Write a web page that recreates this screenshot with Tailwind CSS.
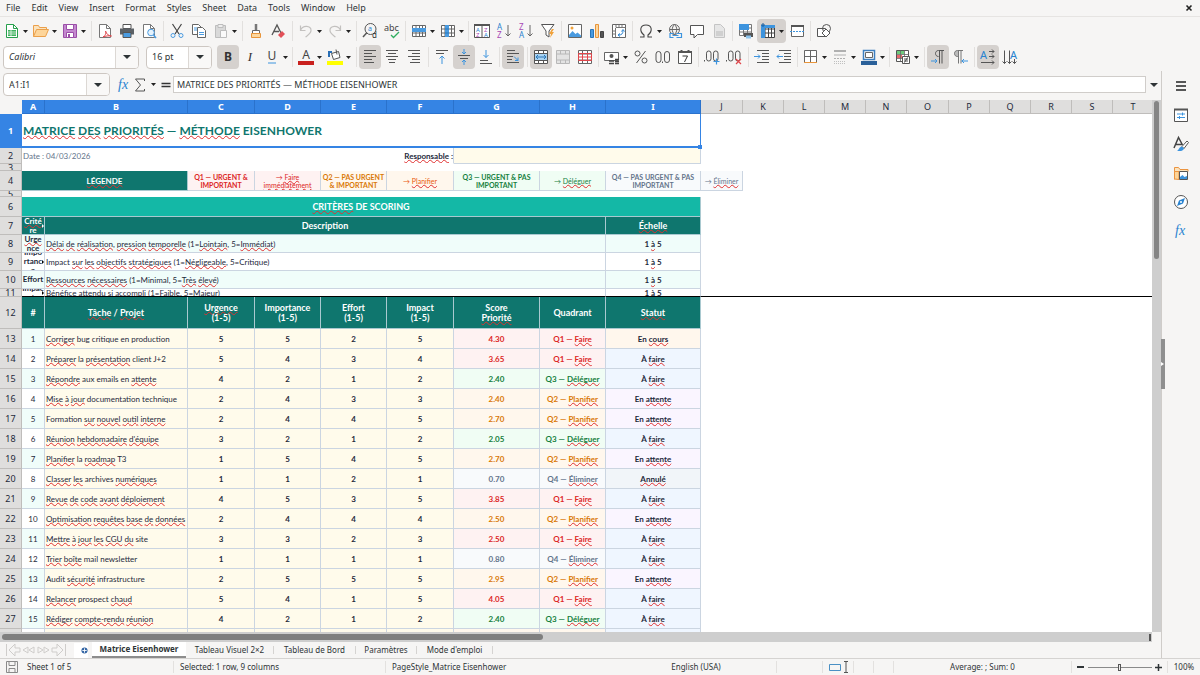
<!DOCTYPE html>
<html lang="fr">
<head>
    <meta charset="UTF-8">
    <meta name="viewport" content="width=device-width, initial-scale=1.0">
    <title>Matrice Eisenhower</title>
    <script src="https://cdn.jsdelivr.net/npm/@tailwindcss/browser@4"></script>
</head>
<body class="bg-[#f6f5f4] text-[#2e3436] font-['Noto_Sans',sans-serif]">
    <div class="h-screen flex flex-col overflow-hidden">
        <!-- Menu bar -->
        <nav class="h-[17px] shrink-0 flex items-center gap-[11px] pl-[6px] pr-[7px] text-[9px] border-b border-[#e6e4e2]">
            <a href="#">File</a>
            <a href="#">Edit</a>
            <a href="#">View</a>
            <a href="#">Insert</a>
            <a href="#">Format</a>
            <a href="#">Styles</a>
            <a href="#">Sheet</a>
            <a href="#">Data</a>
            <a href="#">Tools</a>
            <a href="#">Window</a>
            <a href="#">Help</a>
            <button aria-label="Close" class="ml-auto">
                <svg class="size-2" viewBox="0 0 8 8" fill="none" stroke="#222" stroke-width="1.6"><path d="M1.500 1.500l5 5M6.500 1.500l-5 5"/></svg>
            </button>
        </nav>

        <!-- Standard toolbar -->
        <div id="standardBar" class="h-7 shrink-0 flex items-center pl-px"></div>

        <!-- Formatting toolbar -->
        <div class="h-6 shrink-0 flex items-center pl-[3px]">
            <div class="flex w-[136px] h-[23px] mr-[7px] rounded border border-[#cdc7c2] bg-white overflow-hidden">
                <input aria-label="Font name" value="Calibri" class="flex-1 min-w-0 pl-[5px] text-[9px] italic">
                <button aria-label="Font list" class="w-[23px] border-l border-[#dcd8d4] bg-[#f9f8f7] flex items-center justify-center"><svg class="w-2 h-1" viewBox="0 0 8 4"><path d="M0 0h8L4 4z" fill="#2e3436"/></svg></button>
            </div>
            <div class="flex w-[66px] h-[23px] mr-[5px] rounded border border-[#cdc7c2] bg-white overflow-hidden">
                <input aria-label="Font size" value="16 pt" class="flex-1 min-w-0 pl-[5px] text-[9px]">
                <button aria-label="Size list" class="w-[23px] border-l border-[#dcd8d4] bg-[#f9f8f7] flex items-center justify-center"><svg class="w-2 h-1" viewBox="0 0 8 4"><path d="M0 0h8L4 4z" fill="#2e3436"/></svg></button>
            </div>
            <div id="formatBar" class="flex items-center"></div>
        </div>

        <div class="flex-1 min-h-0 flex">
            <div class="flex-1 min-w-0 flex flex-col">
                <!-- Formula bar -->
                <div class="h-[31px] shrink-0 flex items-center pl-[3px]">
                    <div class="flex w-[107px] h-[23px] rounded border border-[#cdc7c2] bg-white overflow-hidden">
                        <input aria-label="Name box" value="A1:I1" class="flex-1 min-w-0 pl-[5px] text-[9px]">
                        <button aria-label="Named ranges" class="w-[23px] border-l border-[#dcd8d4] bg-[#f9f8f7] flex items-center justify-center"><svg class="w-2 h-1" viewBox="0 0 8 4"><path d="M0 0h8L4 4z" fill="#2e3436"/></svg></button>
                    </div>
                    <div id="formulaButtons" class="flex items-center ml-[5px] pl-px"></div>
                    <input aria-label="Formula" value="MATRICE DES PRIORITÉS — MÉTHODE EISENHOWER" class="flex-1 min-w-0 h-[17px] pl-[3px] bg-white border border-[#d0cdca] text-[9px]">
                    <button aria-label="Expand formula bar" class="w-[15px] flex items-center justify-center"><svg class="w-2 h-1" viewBox="0 0 8 4"><path d="M0 0h8L4 4z" fill="#2e3436"/></svg></button>
                </div>

                <!-- Sheet -->
                <div class="flex-1 min-h-0 flex">
                    <div class="flex-1 min-w-0 bg-white overflow-hidden">
                        <table class="table-fixed w-[1154px] border-separate border-spacing-0 font-[Lato,sans-serif] text-[#1e293b]">
                            <colgroup>
                                <col class="w-[22px]"><col class="w-[23px]"><col class="w-[143px]"><col class="w-[67px]"><col class="w-[66px]"><col class="w-[66px]"><col class="w-[67px]"><col class="w-[86px]"><col class="w-[66px]"><col class="w-[95px]"><col class="w-[42px]">
                                <col class="w-[41px]"><col class="w-[41px]"><col class="w-[41px]"><col class="w-[41px]"><col class="w-[42px]"><col class="w-[41px]"><col class="w-[41px]"><col class="w-[41px]"><col class="w-[41px]"><col class="w-[41px]">
                            </colgroup>
                            <thead><tr id="columnHeads"></tr></thead>
                            <tbody id="cells"></tbody>
                        </table>
                    </div>
                    <div class="w-[9px] bg-[#cecece] px-[2px] pt-px">
                        <div class="h-[158px] rounded-full bg-[#858585]"></div>
                    </div>
                </div>
                <div class="h-[10px] shrink-0 mr-[9px] bg-[#cecece] pl-[2px] flex items-center justify-between">
                    <div class="w-[47%] h-[6px] rounded-full bg-[#7f7f7f]"></div>
                    <div class="w-[2px] h-[7px] mr-px bg-[#555]"></div>
                </div>

                <!-- Sheet tabs -->
                <div class="h-4 shrink-0 flex items-center text-[8px]">
                    <svg class="w-[62px] h-3 ml-[5px] mr-[7px]" viewBox="0 0 62 12" fill="none" stroke="#cfcdcb"><path d="M1.500 0v12M10 0L4 6l6 6V8h5V4h-5zM23 3l-5 3 5 3zM29 3l-5 3 5 3zM33 3l5 3-5 3zM39 3l5 3-5 3zM52 0l6 6-6 6V8h-5V4h5zM60.500 0v12"/></svg>
                    <button aria-label="Add sheet" class="w-[14px] h-[15px] mr-1 bg-white flex items-center justify-end">
                        <svg class="size-[7px]" viewBox="0 0 8 8"><circle cx="4" cy="4" r="3.500" fill="#3465a4"/><path d="M4 1.500v5M1.500 4h5" stroke="#fff"/></svg>
                    </button>
                    <button class="w-[94px] h-4 font-bold bg-white border-b-2 border-[#8d8d8d]">Matrice Eisenhower</button>
                    <button class="w-[88px] h-2 leading-[8px] border-r border-[#d5d3d1]">Tableau Visuel 2×2</button>
                    <button class="w-[82px] h-2 leading-[8px] border-r border-[#d5d3d1]">Tableau de Bord</button>
                    <button class="w-[61px] h-2 leading-[8px] border-r border-[#d5d3d1]">Paramètres</button>
                    <button class="w-[76px] h-2 leading-[8px] border-r border-[#d5d3d1]">Mode d'emploi</button>
                </div>
            </div>

            <!-- Sidebar -->
            <aside id="sidebar" class="relative w-[39px] shrink-0 mt-[2px] border-l border-[#cfccc9] flex flex-col items-center"></aside>
        </div>

        <!-- Status bar -->
        <footer class="h-[17px] shrink-0 flex items-center border-t border-[#d5d3d1] text-[8px] whitespace-nowrap">
            <div class="w-[27px] pl-[6px]"><svg class="size-3" viewBox="0 0 12 12" fill="none" stroke="#8a8a8a"><path d="M.5.5h11v11H.5zM3 .5v4h6v-4M3 11.500v-4h6v4"/></svg></div>
            <div class="w-[147px] h-3 leading-[12px] border-r border-[#e3e1df]">Sheet 1 of 5</div>
            <div class="w-[212px] h-3 leading-[12px] pl-[6px] border-r border-[#e3e1df]">Selected: 1 row, 9 columns</div>
            <div class="flex-1 h-3 leading-[12px] pl-[6px]">PageStyle_Matrice Eisenhower</div>
            <div class="w-[161px] h-3 leading-[12px] text-center border-r border-[#e3e1df]">English (USA)</div>
            <div class="w-[46px] h-3 border-r border-[#e3e1df]"></div>
            <div class="w-[31px] h-3 pl-[6px] border-r border-[#e3e1df]">
                <svg class="w-5 h-3" viewBox="0 0 20 12" fill="none"><path d="M.5 3.500h11v6H.5z" stroke="#4a90c4"/><path d="M15 .5h4M17 .5v11M15 11.500h4" stroke="#555"/></svg>
            </div>
            <div class="w-5 h-3 border-r border-[#e3e1df]"></div>
            <div class="w-5 h-3 border-r border-[#e3e1df]"></div>
            <div class="w-[178px] h-3 leading-[12px] text-center border-r border-[#e3e1df]">Average: ; Sum: 0</div>
            <div class="w-24 h-3 flex items-center justify-between px-[5px] border-r border-[#e3e1df]">
                <button aria-label="Zoom out" class="w-[7px] h-[2px] bg-[#2e3436]"></button>
                <input type="range" aria-label="Zoom" class="appearance-none w-16 h-3 bg-transparent [&::-webkit-slider-runnable-track]:h-px [&::-webkit-slider-runnable-track]:bg-[#8a8a8a] [&::-webkit-slider-thumb]:appearance-none [&::-webkit-slider-thumb]:w-[3px] [&::-webkit-slider-thumb]:h-[7px] [&::-webkit-slider-thumb]:-mt-[3px] [&::-webkit-slider-thumb]:border [&::-webkit-slider-thumb]:border-[#555] [&::-webkit-slider-thumb]:bg-[#eee]">
                <button aria-label="Zoom in"><svg class="size-[7px]" viewBox="0 0 7 7"><path d="M3.500 0v7M0 3.500h7" stroke="#2e3436" stroke-width="1.500"/></svg></button>
            </div>
            <div class="w-8 text-center">100%</div>
        </footer>
    </div>

    <script>
        // Icons, all drawn on a 16x16 grid
        const grid = '<path d="M1.500 2.500h13v11h-13zM1.500 6h13M1.500 10h13M5 2.500v11M8.500 2.500v11M11.500 2.500v11" fill="#fff" stroke="#666"/>';
        const page = '<path d="M2.500 1.500h7l4 4v9h-11z" fill="#fff" stroke="#777"/><path d="M9.500 1.500v4h4" stroke="#777"/>';
        const icons = {
            new: '<path d="M2.500 1.500h7l4 4v9h-11z" fill="#fff" stroke="#27a04c"/><path d="M9.500 1.500v4h4" stroke="#27a04c"/><path d="M4 7h8v6H4z" fill="#3fb25f"/><path d="M4 9h8M4 11h8M7 7v6" stroke="#fff" stroke-width=".7"/>',
            open: '<path d="M.5 13.500v-11h5l1 2h7v2" fill="#fbe3bd" stroke="#eba04b"/><path d="M.5 13.500l3-7h12l-3 7z" fill="#fdd59a" stroke="#eba04b"/>',
            save: '<path d="M1.500 1.500h13v13h-13z" fill="#c489cf" stroke="#9b4fa8"/><path d="M4.500 1.500h7v5h-7zM4.500 14.500v-5h7v5z" fill="#fff" stroke="#9b4fa8"/><path d="M6 11h2v3H6z" fill="#9b4fa8"/>',
            pdf: page + '<path d="M6 14c3-2 3-4 2.500-6 1 3 3 5 6 5-3-.5-6 0-8.500 1z" stroke="#e0474c" fill="none"/>',
            print: '<path d="M4 1.500h8v4H4z" fill="#fff" stroke="#555"/><path d="M1 5.500h14v6H1z" fill="#5c6166"/><path d="M4 9.500h8v5H4z" fill="#4a9be0" stroke="#555"/>',
            preview: page + '<circle cx="10" cy="9.500" r="3.300" fill="#e6f3fd" stroke="#4a9be0"/><path d="M12.500 12l2.500 3" stroke="#4a9be0" stroke-width="1.500"/>',
            cut: '<path d="M3.500 1l6.500 10M12.500 1L6 11" stroke="#444" stroke-width="1.200"/><circle cx="4" cy="12.500" r="2" stroke="#4a9be0"/><circle cx="12" cy="12.500" r="2" stroke="#4a9be0"/>',
            copy: '<path d="M1.500 1.500h6l3 3v7h-9z" fill="#fff" stroke="#666"/><path d="M6.500 4.500h5l3 3v7h-8z" fill="#fff" stroke="#666"/><path d="M8 9.500h5M8 11.500h5M3 5h3M3 7h3" stroke="#4a9be0"/>',
            paste: '<path d="M2.500 2.500h10v12h-10z" fill="#d9d9d9" stroke="#bdbdbd"/><path d="M5 1.500h5v3H5z" fill="#eee" stroke="#bdbdbd"/><path d="M7.500 7.500h6v7h-6z" fill="#fafafa" stroke="#bdbdbd"/>',
            clone: '<path d="M8 1v7" stroke="#777" stroke-width="2.500"/><path d="M4.500 7.500h7v3h-7z" fill="#fff" stroke="#666"/><path d="M3.500 10.500h9v4h-9z" fill="#fcd79f" stroke="#e8953b"/>',
            clear: '<path d="M2 12L7 2l4 8M4 8.500h5" stroke="#555" stroke-width="1.300"/><path d="M8 12l4-4 3 3-4 4z" fill="#e25058"/>',
            undo: '<path d="M2.500 2.500v5h5M2.500 7.500c2-6 11-5 10.500 0 0 3-3 4.500-5.500 6.500" stroke="#c3c1bf" stroke-width="1.200"/>',
            redo: '<path d="M13.500 2.500v5h-5M13.500 7.500c-2-6-11-5-10.500 0 0 3 3 4.500 5.500 6.500" stroke="#c3c1bf" stroke-width="1.200"/>',
            find: '<circle cx="8.500" cy="6" r="5.500" stroke="#555"/><path d="M5 9.500L1 14" stroke="#555" stroke-width="1.500"/><text x="6" y="8" font-size="7" fill="#2a83d0">a</text><text x="10" y="15" font-size="8" fill="#333">d</text>',
            spell: '<text x="0" y="8" font-size="9" fill="#444">abc</text><path d="M7 12l2.500 2.500L15 9" stroke="#2fae60" stroke-width="1.300"/>',
            row: grid + '<path d="M1 5h14v4H1z" fill="#4a9be0"/>',
            col: grid + '<path d="M5 2h4v12H5z" fill="#4a9be0"/><path d="M5 6h4M5 10h4" stroke="#2a76b8"/>',
            sort: '<path d="M.5 1.500h15v13H.5zM8 1.500v13" fill="#fff" stroke="#555"/><path d="M0 2h16" stroke="#555" stroke-width="2"/><text x="2" y="8.500" font-size="6" fill="#2a83d0">A</text><text x="2" y="14" font-size="6" fill="#a848b5">Z</text><text x="10" y="8.500" font-size="6" fill="#a848b5">Z</text><text x="10" y="14" font-size="6" fill="#2a83d0">A</text>',
            asc: '<text x="1" y="7" font-size="8" fill="#2a83d0">A</text><text x="1" y="15" font-size="8" fill="#a848b5">Z</text><path d="M12 2v11M9.500 10.500L12 13l2.500-2.500" stroke="#666"/>',
            desc: '<text x="1" y="7" font-size="8" fill="#a848b5">Z</text><text x="1" y="15" font-size="8" fill="#2a83d0">A</text><path d="M12 2v11M9.500 10.500L12 13l2.500-2.500" stroke="#666"/>',
            filter: '<path d="M1.500 1.500h12.500L9 8v6l-3-2V8z" fill="#fff" stroke="#555"/><path d="M12 6L9 11h2l-1 4 4-6h-2l2-3z" fill="#f0a23c"/>',
            image: '<path d="M1.500 1.500h13v13h-13z" fill="#fff" stroke="#666"/><path d="M2 14v-2l3.500-4 3 3 2-1.500 3.500 3V14z" fill="#4a9be0"/><circle cx="5" cy="5" r="1.500" fill="#f0a23c"/>',
            chart: '<path d="M1.500 6.500h3v8h-3z" fill="#4a9be0" stroke="#2a76b8"/><path d="M6.500 1.500h3v13h-3z" fill="#fcd79f" stroke="#e8953b"/><path d="M11.500 8.500h3v6h-3z" fill="#555" stroke="#444"/>',
            pivot: '<path d="M1.500 1.500h13v13h-13z" fill="#fff" stroke="#666"/><path d="M5 4.500h9.500M4.500 5v9.500M5 1.500v3M8 1.500v3M11 1.500v3M1.500 8h3M1.500 11h3" stroke="#777"/><path d="M7.500 12c3.500 0 4.500-1.500 4.500-4.500M10.500 8.500L12 6.500l1.500 2M9 10.500l-2 1.500 2 1.500" stroke="#2a83d0"/>',
            omega: '<path d="M2 14h4v-2C1 8 2 2 8 2s7 6 2 10v2h4" stroke="#444" stroke-width="1.100"/>',
            link: '<circle cx="7.500" cy="6.500" r="5" stroke="#666"/><path d="M2.500 6.500h10M7.500 1.500c-3 3-3 7 0 10M7.500 1.500c3 3 3 7 0 10" stroke="#666"/><path d="M6.500 10.500H3v4h3.500M9.500 10.500h5v4h-5M5.500 12.500h6" stroke="#3d94de" stroke-width="1.200" fill="none"/>',
            comment: '<path d="M1.500 2.500h13v9H8.500L5 15v-3.500H1.500z" fill="#fff" stroke="#555"/>',
            header: '<path d="M3.500 1.500h6l4 4v9h-10z" fill="#e6e6e6" stroke="#c4c4c4"/><path d="M5 8h7v5H5z" fill="#d0d0d0"/>',
            printArea: '<path d="M1.500 1.500h12v11h-12zM1.500 5h12M1.500 9h12M5.500 1.500v11M9.500 1.500v11" fill="#fff" stroke="#777"/><path d="M1 1h10v6H1z" fill="#3d94de"/><path d="M6 10h9v4H6z" fill="#555"/><path d="M8 12.500h5v3H8z" fill="#8ec5ee"/>',
            freeze: '<path d="M1.500 2.500h13v12h-13zM1.500 6h13M1.500 10h13M5 2.500v12M8.500 2.500v12M11.500 2.500v12" fill="#fff" stroke="#444"/><path d="M1 2h4v13H1zM1 2h14v3H1z" fill="#3d94de"/><path d="M3 0v4M1 2h4" stroke="#1b5f9e"/>',
            split: '<path d="M2.500 2.500h12v11h-12z" fill="#fff" stroke="#666"/><path d="M2 3h13" stroke="#555" stroke-width="2"/><path d="M1 8.500h15" stroke="#3d94de" stroke-dasharray="2 1"/>',
            shapes: '<path d="M1.500 5.500h8v8h-8z" fill="#fff" stroke="#555"/><circle cx="10.500" cy="5.500" r="4" stroke="#555"/><path d="M10 6l4 4-4 4-4-4z" fill="#fff" stroke="#555"/>',
            bold: '<text x="8" y="12" font-size="12" font-weight="700" text-anchor="middle" fill="#333">B</text>',
            italic: '<text x="8" y="12" font-size="13" font-family="Liberation Serif" font-style="italic" text-anchor="middle" fill="#333">I</text>',
            underline: '<text x="8" y="11" font-size="12" text-anchor="middle" fill="#444">U</text><path d="M4 14h8" stroke="#3d94de"/>',
            color: '<text x="8" y="10" font-size="12" text-anchor="middle" fill="#444">A</text><path d="M0 14h16" stroke="#c9211e" stroke-width="4"/>',
            fill: '<path d="M4.500 4.500l7-2 1.500 6-6.500 2z" fill="#fff" stroke="#555"/><path d="M2 8V3h3" stroke="#2a6fb5" stroke-width="2"/><path d="M9 .5l1 5" stroke="#555"/><path d="M0 14h16" stroke="#ffff00" stroke-width="4"/>',
            left: '<path d="M2 1.500h12M2 4.500h8M2 7.500h12M2 10.500h8M2 13.500h10" stroke="#555"/>',
            center: '<path d="M2 1.500h12M4 4.500h8M2 7.500h12M4 10.500h8M5 13.500h6" stroke="#555"/>',
            right: '<path d="M2 1.500h12M6 4.500h8M2 7.500h12M6 10.500h8M4 13.500h10" stroke="#555"/>',
            top: '<path d="M2 1.500h12M2 4.500h8" stroke="#555"/><path d="M8 15V7M5.500 9.500L8 7l2.500 2.500" stroke="#3d94de"/>',
            middle: '<path d="M2 6.500h12M4 9.500h8" stroke="#555"/><path d="M8 0v5M6 3l2 2 2-2M8 16v-5M6 13l2-2 2 2" stroke="#3d94de"/>',
            bottom: '<path d="M2 11.500h8M2 14.500h12" stroke="#555"/><path d="M8 1v7.500M5.500 6L8 8.500 10.500 6" stroke="#3d94de"/>',
            wrap: '<path d="M2 1.500h8M2 4.500h12M2 7.500h6M2 10.500h5M2 13.500h12" stroke="#555"/><path d="M9 7.500l4 4M13 8.500v3h-3" stroke="#3d94de"/>',
            merge: '<path d="M1.500 1.500h13v13h-13zM1.500 4.500h13M1.500 11.500h13M5.500 1.500v3M10.500 1.500v3M5.500 11.500v3M10.500 11.500v3" fill="#fff" stroke="#555"/><path d="M2 5h12v6H2z" fill="#a8d3f3"/><path d="M3 8h10M5 6L3 8l2 2M11 6l2 2-2 2" stroke="#2a76b8"/>',
            mergeCells: '<path d="M1.500 1.500h13v13h-13zM1.500 5h13M1.500 11h13M5.500 1.500V5M10.500 1.500V5M5.500 11v3.500M10.500 11v3.500" fill="#e3e3e3" stroke="#b8b8b8"/>',
            splitCells: '<path d="M1.500 1.500h13v13h-13zM1.500 5h13M1.500 11h13M5.500 1.500v13M10.500 1.500v13" fill="#fff" stroke="#666"/><path d="M1.500 4.500h13v7h-13zM5.500 4.500v7M10.500 4.500v7M1.500 8h13" stroke="#e0474c"/>',
            currency: '<path d="M.5 3.500h14v8H.5z" fill="#fff" stroke="#666"/><circle cx="7.500" cy="7" r="2" fill="#555"/><path d="M5 12h5M5 14.500h5M11 10.500h4M11 12.500h4M11 14.500h4" stroke="#444" stroke-width="1.500"/>',
            percent: '<circle cx="4.500" cy="4.500" r="2.500" stroke="#555"/><circle cx="11.500" cy="11.500" r="2.500" stroke="#555"/><path d="M12.500 2l-9 12" stroke="#555"/>',
            number: '<rect x="1" y="2.500" width="5" height="11" rx="2.500" stroke="#555"/><rect x="9.500" y="2.500" width="5" height="11" rx="2.500" stroke="#555"/><path d="M7.500 12.500v1.500" stroke="#555"/>',
            date: '<path d="M1.500 2.500h13v12h-13z" fill="#fff" stroke="#555"/><path d="M1 3h14M4.500 1v3M11.500 1v3" stroke="#555" stroke-width="2"/><path d="M5.500 7h5l-3 6" stroke="#333"/>',
            addDec: '<rect x="2.500" y="2" width="4.500" height="10" rx="2.200" stroke="#555"/><rect x="9.500" y="2" width="4.500" height="10" rx="2.200" stroke="#555"/><path d="M.5 11v1.500" stroke="#555"/><path d="M12.500 9.500v6M9.500 12.500h6" stroke="#3d94de" stroke-width="1.200"/>',
            delDec: '<rect x="2.500" y="2" width="4.500" height="10" rx="2.200" stroke="#555"/><rect x="9.500" y="2" width="4.500" height="10" rx="2.200" stroke="#555"/><path d="M.5 11v1.500" stroke="#555"/><path d="M10 10l5 5M15 10l-5 5" stroke="#e0474c" stroke-width="1.200"/>',
            indent: '<path d="M3 1.500h12M8 4.500h7M8 7.500h7M8 10.500h7M3 13.500h12" stroke="#555"/><path d="M0 7.500h6M4 5.500l2 2-2 2" stroke="#3d94de"/>',
            outdent: '<path d="M3 1.500h12M8 4.500h7M8 7.500h7M8 10.500h7M3 13.500h12" stroke="#555"/><path d="M1 7.500h6M3 5.500l-2 2 2 2" stroke="#3d94de"/>',
            borders: '<path d="M1.500 1.500h12v12h-12zM1.500 7.500h12M7.500 1.500v12" fill="#fff" stroke="#666"/><path d="M1 13.500h13" stroke="#e8953b"/>',
            lineStyle: '<path d="M2 2h12" stroke="#b0b0b0" stroke-width="2"/><path d="M2 6h12" stroke="#b0b0b0"/><path d="M2 9.500h12" stroke="#b0b0b0" stroke-dasharray="2 1"/><path d="M2 12.500h12M2 14.500h12" stroke="#c0c0c0" stroke-dasharray="1 1"/>',
            borderColor: '<path d="M2.500 1.500h11v9h-11z" fill="#fff" stroke="#3d7fc0" stroke-width="1.500"/><path d="M4.500 3.500h7v5h-7z" stroke="#666"/><path d="M0 14h16" stroke="#2a6099" stroke-width="4"/>',
            conditional: '<path d="M1.500 1.500h12v11h-12z" fill="#fff" stroke="#555"/><path d="M2 2h7v3H2z" fill="#6ecb7d"/><path d="M2 6h5v3H2z" fill="#e8696d"/><path d="M1.500 5.500h12M1.500 9.500h12M5.500 1.500v11M9.500 1.500v11" stroke="#666" stroke-width=".8"/><path d="M7.500 7.500h7v7h-7z" fill="#fff" stroke="#555"/><path d="M9 10h4M9 12h4M12.500 8.500l-3 5" stroke="#555"/>',
            ltr: '<path d="M14 1.500H8.500c-4 0-4 6 0 6M9.500 1.500v13M12 1.500v13" stroke="#555"/><path d="M1 12h6M5 10l2 2-2 2" stroke="#3d94de"/>',
            rtl: '<path d="M6.500 1.500h-1c-4.500 0-4.500 6 0 6h1z" fill="#bbb"/><path d="M11 1.500H5.500c-4 0-4 6 0 6h1M6.500 1.500v13M9 1.500v13" stroke="#777"/><path d="M9.500 12H16M12 10l-2 2 2 2" stroke="#3d94de"/>',
            horizontal: '<text x="0" y="9.500" font-size="11" fill="#2a83d0">A</text><path d="M9 2.500h5M9 7.500h5M1 13.500h13M12 .5l2 2-2 2M12 5.500l2 2-2 2M12 11.500l2 2-2 2" stroke="#555"/>',
            vertical: '<text x="8" y="9.500" font-size="11" fill="#2a83d0">A</text><path d="M2.500 1.500v13M7.500 1.500v13M12.500 10v4.500M.5 12.500l2 2 2-2M5.500 12.500l2 2 2-2M10.500 12.500l2 2 2-2" stroke="#555"/>',
            fx: '<text x="2" y="12" font-size="14" font-family="Liberation Serif" font-style="italic" fill="#2a83d0">fx</text>',
            sum: '<path d="M12.500 4V2h-9l5 6-5 6h9v-2" stroke="#555"/>',
            equals: '<path d="M3.500 6.500h9M3.500 9.500h9" stroke="#333" stroke-width="1.300"/>',
            menu: '<path d="M3 4h10M3 8h10M3 12h10" stroke="#222" stroke-width="1.400"/>',
            properties: '<path d="M1.500 2.500h13v12h-13z" fill="#fff" stroke="#555"/><path d="M1 2.500h14" stroke="#555" stroke-width="2"/><path d="M4 7h8M4 10.500h8M9.500 5.500v3M6.500 9v3" stroke="#3d94de"/>',
            styles: '<path d="M1 12L5.500 1.500 9.500 9M3 8.500h6" stroke="#444" stroke-width="1.500"/><path d="M9 10.500L14 5l1.500 1.500-4.500 6z" fill="#fff" stroke="#555"/><path d="M4 14.500c2 0 2-4 5-4l2 2c-1 3-5 3-7 2z" fill="#3d94de"/>',
            gallery: '<path d="M1.500 14.500v-12h4l1.500 2h8v2" fill="#fbe3bd" stroke="#eb9440"/><path d="M1.500 14V6.500H6v8z" fill="#fdd59a" stroke="#eb9440"/><path d="M6.500 6.500h8v8h-8z" fill="#fff" stroke="#555"/><path d="M7 14v-2l2.500-2 2 2 2.500-1V14z" fill="#3d94de"/>',
            navigator: '<circle cx="8" cy="8" r="6.500" fill="#fff" stroke="#555"/><path d="M12 4l-2 5.500L4 12l2-5.500z" fill="#2a83d0"/><circle cx="8" cy="8" r="1" fill="#fff"/>'
        };

        // name, name> = with drop-down arrow, name* = pressed, | and || = separators
        const toolbars = {
            standardBar: 'new> open> save> || pdf print preview || cut copy paste> || clone clear || undo> redo> || find spell | row> col> | sort asc desc filter | image chart pivot | omega> link comment header | printArea freeze*> split | shapes',
            formatBar: 'bold* italic underline> | color> fill> || left* center right || top middle* bottom | wrap* || merge* mergeCells splitCells | currency> percent number date | addDec delDec || indent outdent | borders> lineStyle> borderColor> | conditional> || ltr* rtl || horizontal* vertical'
        };

        const svg = name => `<svg class="size-4 shrink-0 overflow-visible" viewBox="0 0 16 16" fill="none">${icons[name]}</svg>`;
        const arrow = '<svg class="w-[5px] h-[3px] shrink-0" viewBox="0 0 5 3"><path d="M0 0h5L2.500 3z" fill="#222"/></svg>';

        for (const id in toolbars) {
            document.getElementById(id).innerHTML = toolbars[id].split(' ').map(item => {
                if (item === '|') return '<div class="w-[5px] h-5 flex justify-center"><div class="w-px bg-[#e2e0de]"></div></div>';
                if (item === '||') return '<div class="w-[6px] h-5 flex justify-center"><div class="w-px bg-[#e2e0de]"></div></div>';
                const name = item.replace(/[*>]/g, '');
                const pressed = item.includes('*') ? 'bg-[#d5d1ce]' : '';
                const drop = item.includes('>');
                return `<button aria-label="${name}" class="h-6 rounded flex items-center ${pressed} ${drop ? 'w-[29px] pl-[3px] gap-[3px]' : 'w-[22px] justify-center'}">${svg(name)}${drop ? arrow : ''}</button>`;
            }).join('');
        }

        document.getElementById('formulaButtons').innerHTML = `
            <button aria-label="Function wizard" class="w-4">${svg('fx')}</button>
            <button aria-label="Select function" class="w-[26px] flex items-center gap-[3px]">${svg('sum')}${arrow}</button>
            <button aria-label="Formula" class="w-[15px]">${svg('equals')}</button>`;

        document.getElementById('sidebar').innerHTML = ['menu', 'properties', 'styles', 'gallery', 'navigator', 'fx'].map(name =>
            `<button aria-label="${name}" class="h-[29px] w-6 flex items-center justify-center">${svg(name)}</button>`).join('') +
            '<button aria-label="Hide sidebar" class="absolute -left-px top-[268px] w-1 h-[50px] bg-[#8f8f8f] flex items-center"><svg class="w-[3px] h-1" viewBox="0 0 3 4"><path d="M0 0l3 2-3 2z" fill="#fff"/></svg></button>';

        // Words between underscores are flagged by the spell checker
        const spell = text => text.replace(/_([^_]+)_/g, '<span class="underline decoration-wavy decoration-[#e03030] decoration-1 underline-offset-0 [text-decoration-skip-ink:none]">$1</span>');

        // Column headings
        document.getElementById('columnHeads').innerHTML = '<th class="p-0 bg-[#f6f5f4]"></th>' + [...'ABCDEFGHIJKLMNOPQRST'].map((c, i) =>
            `<th class="p-0 h-[14px] text-[9px] leading-[13px] font-['Noto_Sans',sans-serif] border-r border-b ${i < 9 ? 'bg-[#3584e4] text-white border-[#2a72cc]' : 'bg-[#dfdedd] font-normal border-[#bfbdbb]'}">${c}</th>`).join('');

        // h: content height of the row; every cell adds a one-pixel border
        const cell = (text, look, span = 1, h = 'h-[19px]') =>
            `<td colspan="${span}" class="p-0 border-r border-b ${look}"><div class="${h} flex flex-col justify-center overflow-hidden">${text ? `<div>${spell(text)}</div>` : ''}</div></td>`;
        const row = (n, h, cells, blank = 'border-transparent') =>
            `<tr><th class="p-0 text-[9px] leading-[9px] font-['Noto_Sans',sans-serif] border-r border-b ${n === 1 ? 'bg-[#3584e4] text-white font-bold border-[#3584e4]' : 'bg-[#dfdedd] font-normal border-[#bfbdbb]'}"><div class="${h} flex items-center justify-center overflow-hidden">${n}</div></th>${cells.map(c => cell(c[0], c[1], c[2], h)).join('')}${cell('', blank, 20 - cells.reduce((s, c) => s + (c[2] || 1), 0), h)}</tr>`;

        const dark = 'bg-[#0f766e] text-white font-bold text-center border-[#a9c9d0]';
        const mint = 'bg-[#f0fdfa] border-[#cbd5e1]';
        const white = 'bg-white border-[#cbd5e1]';
        const none = 'border-transparent';
        // small triangle shown where a text is longer than its cell
        const clipped = ' relative after:absolute after:right-0 after:top-1/2 after:-mt-[2px] after:border-y-2 after:border-l-2 after:border-y-transparent';
        const legend = 'text-[7px] leading-[8px] text-center border-[#cbd5e1] ';
        const q = {
            Q1: ['bg-[#fef2f2] text-[#dc2626]', 'Q1 — _Faire_'],
            Q2: ['bg-[#fff7ed] text-[#d97706]', 'Q2 — _Planifier_'],
            Q3: ['bg-[#f0fdf4] text-[#15803d]', 'Q3 — _Déléguer_'],
            Q4: ['bg-[#f8fafc] text-[#64748b]', 'Q4 — _Éliminer_']
        };
        const statusLook = { 'En _cours_': 'bg-[#fff7ed]', 'À _faire_': 'bg-[#eff6ff]', 'En _attente_': 'bg-[#faf5ff]', '_Annulé_': 'bg-[#f1f5f9]' };

        const criteria = [
            [8, 'h-[17px]', '_Urge_<br>_nce_', '_Délai_ _de_ _réalisation_, _pression_ _temporelle_ (1=_Lointain_, 5=_Immédiat_)'],
            [9, 'h-[17px]', 'Impo<br>rtanc<br>e', 'Impact _sur_ _les_ _objectifs_ _stratégiques_ (1=_Négligeable_, 5=Critique)'],
            [10, 'h-[17px]', 'Effort', '_Ressources_ _nécessaires_ (1=Minimal, 5=_Très_ _élevé_)'],
            [11, 'h-[7px]', 'Impac<br>t', '_Bénéfice_ _attendu_ _si_ _accompli_ (1=_Faible_, 5=_Majeur_)']
        ];

        const tasks = [
            ['_Corriger_ bug critique en production', 5, 5, 2, 5, '4.30', 'Q1', 'En _cours_'],
            ['_Préparer_ la _présentation_ client J+2', 5, 4, 3, 4, '3.65', 'Q1', 'À _faire_'],
            ['_Répondre_ aux emails en _attente_', 4, 2, 1, 2, '2.40', 'Q3', 'À _faire_'],
            ['_Mise_ _à_ _jour_ documentation technique', 2, 4, 3, 3, '2.40', 'Q2', 'En _attente_'],
            ['Formation _sur_ _nouvel_ _outil_ _interne_', 2, 4, 4, 5, '2.70', 'Q2', 'En _attente_'],
            ["_Réunion_ _hebdomadaire_ _d'équipe_", 3, 2, 1, 2, '2.05', 'Q3', 'À _faire_'],
            ['_Planifier_ la _roadmap_ T3', 1, 5, 4, 5, '2.70', 'Q2', 'En _attente_'],
            ['_Classer_ _les_ archives _numériques_', 1, 1, 2, 1, '0.70', 'Q4', '_Annulé_'],
            ['_Revue_ _de_ _code_ _avant_ _déploiement_', 4, 5, 3, 5, '3.85', 'Q1', 'À _faire_'],
            ['_Optimisation_ _requêtes_ _base_ _de_ _données_', 2, 4, 4, 4, '2.50', 'Q2', 'En _attente_'],
            ['_Mettre_ _à_ _jour_ _les_ _CGU_ _du_ site', 3, 3, 2, 3, '2.50', 'Q1', 'À _faire_'],
            ['_Trier_ _boîte_ mail newsletter', 1, 1, 1, 1, '0.80', 'Q4', 'À _faire_'],
            ['Audit _sécurité_ infrastructure', 2, 5, 5, 5, '2.95', 'Q2', 'En _attente_'],
            ['_Relancer_ prospect _chaud_', 5, 4, 1, 5, '4.05', 'Q1', 'À _faire_'],
            ['_Rédiger_ _compte-rendu_ _réunion_', 4, 2, 1, 2, '2.40', 'Q3', 'À _faire_']
        ];

        let html = row(1, 'h-[33px]', [['_MATRICE_ _DES_ _PRIORITÉS_ — _MÉTHODE_ EISENHOWER', 'pl-px relative text-[12px] leading-[16px] font-bold text-[#0f766e] border-[#3584e4] shadow-[inset_0_-1px_0_#3584e4] after:absolute after:-right-[2px] after:-bottom-[2px] after:size-1 after:bg-[#3584e4]', 9]]);
        html += row(2, 'h-[15px]', [
            ['Date : 04/03/2026', 'pl-px text-[8px] leading-[14px] text-[#64748b] border-transparent', 5],
            ['_Responsable_ :', 'text-[8px] text-right font-bold whitespace-nowrap border-[#cbd5e1] border-b-transparent'],
            ['', 'bg-[#fffbeb] border-[#cbd5e1]', 3]
        ]);
        html += row(3, 'h-[6px]', []);
        html += row(4, 'h-[19px]', [
            ['_LÉGENDE_', dark + ' text-[8px]', 2],
            ['Q1 — URGENT &amp;<br>IMPORTANT', legend + 'font-bold bg-[#fef2f2] text-[#dc2626]'],
            ['→ _Faire_<br>_immédiatement_', legend + 'bg-[#fef2f2] text-[#dc2626]'],
            ['Q2 — PAS URGENT<br>&amp; IMPORTANT', legend + 'font-bold bg-[#fff7ed] text-[#d97706]'],
            ['→ _Planifier_', legend + 'bg-[#fff7ed] text-[#ea580c]'],
            ['Q3 — URGENT &amp; PAS<br>IMPORTANT', legend + 'font-bold bg-[#f0fdf4] text-[#15803d]'],
            ['→ _Déléguer_', legend + 'bg-[#f0fdf4] text-[#15803d]'],
            ['Q4 — PAS URGENT &amp; PAS<br>IMPORTANT', legend + 'font-bold bg-[#f8fafc] text-[#64748b]'],
            ['→ _Éliminer_', legend + 'bg-[#f8fafc] text-[#64748b]']
        ]);
        html += row(5, 'h-[5px]', []);
        html += row(6, 'h-[19px]', [['_CRITÈRES_ DE SCORING', 'bg-[#14b8a6] text-white font-bold text-center text-[9px] border-[#a9c9d0]', 9]]);
        html += row(7, 'h-[17px]', [['_Crité_<br>re', dark + clipped + ' after:border-l-white text-[8px] leading-[9px]'], ['Description', dark + ' text-[9px]', 7], ['_Échelle_', dark + ' text-[9px]']]);
        criteria.forEach(([n, h, name, text], i) => {
            const look = n === 11 ? 'bg-white border-[#cbd5e1] border-b-black' : i % 2 ? white : mint;
            html += row(n, h, [
                [name, look + (i % 2 ? clipped + ' after:border-l-black' : '') + ' text-[8px] leading-[9px] text-center font-bold'],
                [text, look + ' pl-px text-[8px] leading-[10px]', 7],
                ['1 _à_ 5', look + ' text-[8px] leading-[10px] text-center font-bold']
            ], n === 11 ? 'border-r-transparent border-b-black' : none);
        });
        html += row(12, 'h-[31px]', ['#', '_Tâche_ / _Projet_', '_Urgence_<br>(1-5)', 'Importance<br>(1-5)', 'Effort<br>(1-5)', 'Impact<br>(1-5)', 'Score<br>_Priorité_', 'Quadrant', '_Statut_'].map(t => [t, dark + ' text-[9px] leading-[10px]']));
        tasks.forEach(([task, u, imp, eff, act, score, quad, status], i) => {
            const input = 'bg-[#fffbeb] border-[#cbd5e1] text-[8px]';
            const ranked = 'text-[8px] text-center font-bold whitespace-nowrap border-[#cbd5e1] ' + q[quad][0];
            html += row(13 + i, 'h-[19px]', [
                [String(i + 1), (i % 2 ? white : mint) + ' text-[8px] text-center'],
                [task, input + ' pl-px whitespace-nowrap'],
                ...[u, imp, eff, act].map(v => [String(v), input + ' text-center font-bold']),
                [score, ranked],
                [q[quad][1], ranked],
                [status, 'text-[8px] text-center font-bold border-[#cbd5e1] ' + statusLook[status]]
            ]);
        });
        html += row('', 'h-[19px]', [['', white], ...Array(5).fill(['', 'bg-[#fffbeb] border-[#cbd5e1]']), ['', 'bg-[#fff7ed] border-[#cbd5e1]'], ['', 'bg-[#fff7ed] border-[#cbd5e1]'], ['', 'bg-[#eff6ff] border-[#cbd5e1]']]);
        document.getElementById('cells').innerHTML = html;
    </script>
</body>
</html>
